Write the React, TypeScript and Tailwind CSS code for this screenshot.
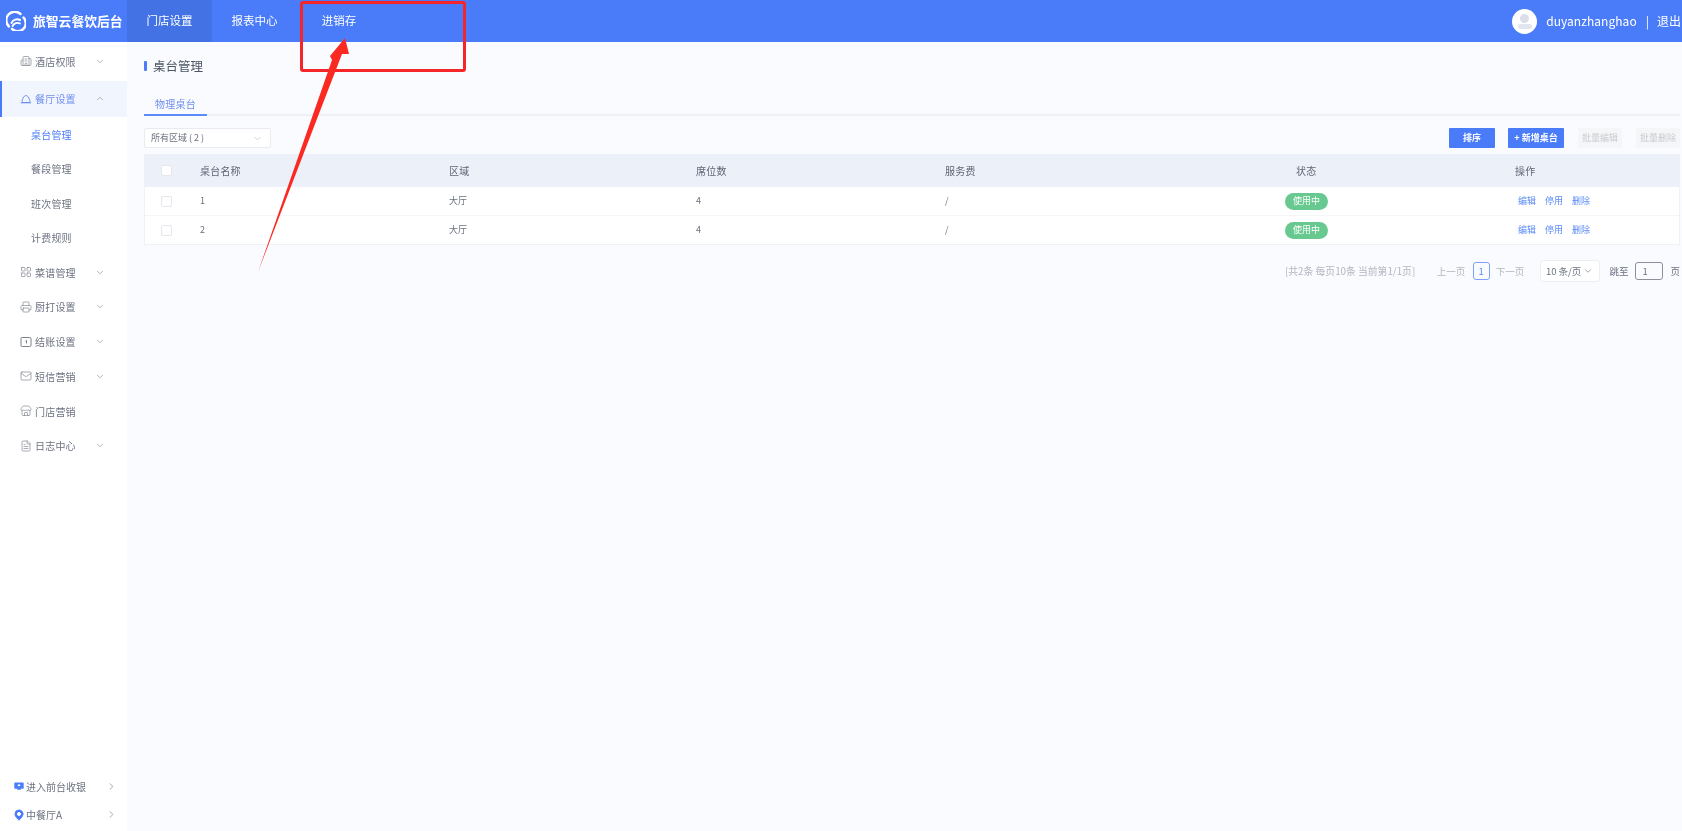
import { ChevronDown, ChevronRight, ChevronUp, Mail, MapPin, LayoutGrid, Printer, Store, FileText, Building2 } from "lucide-react";

const font = "font-['Noto_Sans_CJK_SC','Noto_Sans',sans-serif]";

const topNav = [
  { label: "门店设置", active: true, w: "w-[85px]" },
  { label: "报表中心", active: false, w: "w-[85px]" },
  { label: "进销存", active: false, w: "w-[84px]" },
];

function DomeIcon({ size = 12, className = "" }: { size?: number; className?: string }) {
  return (
    <svg width={size} height={size} viewBox="0 0 12 12" fill="none" stroke="currentColor" strokeWidth="1" className={className}>
      <path d="M2 9.500C1.800 7 3.800 2.500 6 2.500S10.200 7 10 9.500Z" strokeLinejoin="round" />
      <path d="M.8 9.800h10.400" />
    </svg>
  );
}

function CashIcon({ size = 12, className = "" }: { size?: number; className?: string }) {
  return (
    <svg width={size} height={size} viewBox="0 0 12 12" fill="none" stroke="currentColor" strokeWidth="1" className={className}>
      <rect x="1" y="1.500" width="10" height="9" rx="1.200" />
      <path d="M6.500 4.500v3M5.500 5l1-.6" />
    </svg>
  );
}

const menuAfter = [
  { label: "菜谱管理", icon: LayoutGrid, arrow: true },
  { label: "厨打设置", icon: Printer, arrow: true },
  { label: "结账设置", icon: CashIcon, arrow: true },
  { label: "短信营销", icon: Mail, arrow: true },
  { label: "门店营销", icon: Store, arrow: false },
  { label: "日志中心", icon: FileText, arrow: true },
];

const subMenu = [
  { label: "桌台管理", active: true },
  { label: "餐段管理", active: false },
  { label: "班次管理", active: false },
  { label: "计费规则", active: false },
];

const rows = [
  { id: 1, name: "1", h: "h-[29px] border-b border-[#f3f5f9]" },
  { id: 2, name: "2", h: "h-[28px]" },
];

function Logo() {
  return (
    <svg width="20" height="20" viewBox="0 0 20 20" fill="none" stroke="#fff" strokeLinecap="round" className="shrink-0">
      <path d="M14.500 3A8 8 0 0 0 3 15.500" strokeWidth="2.400" />
      <path d="M6 17.800A8 8 0 0 0 17.500 6.500" strokeWidth="2.400" />
      <path d="M5.500 12C7 8.500 11 7.500 14 9" strokeWidth="2" />
      <path d="M6.500 15C8 12 11.500 11 14 12.500" strokeWidth="1.800" />
    </svg>
  );
}

function MenuRow({ label, Icon, arrow }: { label: string; Icon: React.ComponentType<{ size?: number; strokeWidth?: number; className?: string }>; arrow: boolean }) {
  return (
    <div className="flex h-[34.750px] items-center pl-5 pr-[22px] text-[#6b7280]">
      <Icon size={12} strokeWidth={1.3} className="shrink-0 text-[#7b8089]" />
      <span className="ml-[3px] w-[55px] text-[10px] tracking-[0.2px]">{label}</span>
      {arrow && <ChevronDown size={11} strokeWidth={1.6} className="ml-[9px] text-[#8a8f98]" />}
    </div>
  );
}

function Checkbox() {
  return <div className="h-[11px] w-[11px] rounded-[2px] border border-[#e3e6ec] bg-white" />;
}

const cols = "grid-cols-[55px_249px_247px_249px_296px_241px_1fr]";

export default function App() {
  return (
    <div className={`relative flex h-[831px] w-[1682px] flex-col overflow-hidden bg-[#fafbff] blur-[0.4px] ${font}`}>
      {/* Top bar */}
      <header className="flex h-[42px] shrink-0 items-center bg-[#4a7cfa] text-white">
        <div className="flex w-[127px] items-center pl-[6px]">
          <Logo />
          <span className="ml-[7px] whitespace-nowrap text-[12.800px] font-bold">旅智云餐饮后台</span>
        </div>
        {topNav.map((item) => (
          <div
            key={item.label}
            className={`flex h-full items-center justify-center text-[11.500px] ${item.w} ${item.active ? "bg-[#4272e4]" : ""}`}
          >
            {item.label}
          </div>
        ))}
        <div className="ml-auto flex items-center">
          <div className="flex h-[25px] w-[25px] flex-col items-center justify-center rounded-full bg-white">
            <div className="h-[9px] w-[9px] rounded-full bg-[#d9deea]" />
            <div className="mt-[1px] h-[5px] w-[14px] rounded-full bg-[#e1e5ee]" />
          </div>
          <span className="ml-[9px] text-[12px] tracking-[0.05px]">duyanzhanghao</span>
          <span className="ml-[9px] text-[12px]">|</span>
          <span className="ml-[8px] w-[25px] whitespace-nowrap text-[12px]">退出</span>
        </div>
      </header>

      <div className="flex min-h-0 flex-1">
        {/* Sidebar */}
        <aside className="flex w-[127px] shrink-0 flex-col bg-white pt-[2px]">
          <MenuRow label="酒店权限" Icon={Building2} arrow />
          <div className="mt-[2px] flex h-[36px] items-center border-l-2 border-[#4a7cfa] bg-[#f1f5fe] pl-[18px] pr-[22px] text-[#6f8ff0]">
            <DomeIcon className="shrink-0" />
            <span className="ml-[3px] w-[55px] text-[10px] tracking-[0.2px]">餐厅设置</span>
            <ChevronUp size={11} strokeWidth={1.6} className="ml-[9px] text-[#8a8f98]" />
          </div>
          {subMenu.map((s) => (
            <div
              key={s.label}
              className={`flex h-[34.500px] items-center pl-[31px] text-[10px] tracking-[0.2px] ${s.active ? "text-[#4a7cfa]" : "text-[#6b7280]"}`}
            >
              {s.label}
            </div>
          ))}
          {menuAfter.map((m) => (
            <MenuRow key={m.label} label={m.label} Icon={m.icon} arrow={m.arrow} />
          ))}
          <div className="mt-auto pb-[2px]">
            <div className="flex h-[28px] items-center pl-[14px] text-[10px] text-[#6b7280]">
              <svg width="10" height="10" viewBox="0 0 10 10" className="shrink-0">
                <path d="M1 1.500h8a.7.7 0 0 1 .7.700v4.800a.7.7 0 0 1-.7.700H6.500l.6 1H2.900l.6-1H1a.7.7 0 0 1-.7-.700V2.200A.7.7 0 0 1 1 1.500Z" fill="#4a7cfa" />
                <rect x="3.800" y="3.500" width="2.400" height="1.600" fill="#fff" />
              </svg>
              <span className="ml-[2px] w-[80px]">进入前台收银</span>
              <ChevronRight size={11} strokeWidth={2} className="text-[#9aa0aa]" />
            </div>
            <div className="flex h-[29px] items-center pl-[13px] text-[10px] text-[#6b7280]">
              <MapPin size={12} fill="#4a7cfa" stroke="#4a7cfa" strokeWidth={2} className="shrink-0 [&>circle]:fill-white [&>circle]:stroke-white" />
              <span className="ml-px w-[80px]">中餐厅A</span>
              <ChevronRight size={11} strokeWidth={2} className="text-[#9aa0aa]" />
            </div>
          </div>
        </aside>

        {/* Main */}
        <main className="min-w-0 flex-1 pl-[17px] pr-[2px]">
          <div className="mt-[14px] flex h-[20px] items-center">
            <div className="h-[10px] w-[3px] rounded-[1px] bg-[#4a7cfa]" />
            <h1 className="ml-[6px] text-[12.500px] font-normal text-[#4b5563]">桌台管理</h1>
          </div>

          <div className="mt-[17px] flex h-[23px] border-b-2 border-[#edf0f5]">
            <div className="-mb-[2px] flex w-[63px] justify-center border-b-2 border-[#5b8bf8] pt-[4px] text-[10px] leading-[14px] tracking-[0.2px] text-[#6f8ff0]">
              物理桌台
            </div>
          </div>

          <div className="mt-[12px] flex h-[20px] items-center">
            <div className="flex h-[20px] w-[127px] items-center justify-between rounded-[2px] border border-[#e8ebf1] bg-white pl-[6px] pr-[7px] text-[9px] text-[#6b7280]">
              所有区域 ( 2 )
              <ChevronDown size={11} strokeWidth={1.4} className="text-[#b8bcc4]" />
            </div>
            <button className="ml-auto h-[20px] w-[46px] rounded-[1px] bg-[#4a7cfa] text-[9px] font-bold text-white">排序</button>
            <button className="ml-[13px] h-[20px] w-[56px] rounded-[1px] bg-[#4a7cfa] text-[9px] font-bold text-white">+ 新增桌台</button>
            <button className="ml-[14px] h-[20px] w-[44px] rounded-[1px] bg-[#f5f6f8] text-[9px] text-[#c9ccd2]">批量编辑</button>
            <button className="ml-[14px] h-[20px] w-[44px] rounded-[1px] bg-[#f5f6f8] text-[9px] text-[#c9ccd2]">批量删除</button>
          </div>

          {/* Table */}
          <div className="mt-[6px] border-x border-b border-[#eff1f6] bg-white">
            <div className={`grid h-[33px] items-center bg-[#ecf0f9] pb-[1px] text-[10px] tracking-[0.2px] text-[#5f6673] ${cols}`}>
              <div className="pl-[16px]"><Checkbox /></div>
              <div>桌台名称</div>
              <div>区域</div>
              <div>席位数</div>
              <div>服务费</div>
              <div className="pl-[55px]">状态</div>
              <div className="pl-[33px]">操作</div>
            </div>
            {rows.map((row) => (
              <div key={row.id} className={`grid items-center text-[9px] text-[#6b7280] ${cols} ${row.h}`}>
                <div className="pl-[16px]"><Checkbox /></div>
                <div>{row.name}</div>
                <div>大厅</div>
                <div>4</div>
                <div>/</div>
                <div className="pl-[44px]">
                  <span className="flex h-[17px] w-[43px] items-center justify-center rounded-full bg-[#67c98f] text-white">使用中</span>
                </div>
                <div className="flex gap-[9px] pl-[36px] text-[#5b8bf8]">
                  <span>编辑</span>
                  <span>停用</span>
                  <span>删除</span>
                </div>
              </div>
            ))}
          </div>

          {/* Pagination */}
          <div className="mt-[15px] flex h-[22px] items-center text-[9.500px] text-[#b3b7c0]">
            <span className="ml-[1141px] w-[152px] whitespace-nowrap text-[9.800px]">[共2条 每页10条 当前第1/1页]</span>
            <span className="w-[36px]">上一页</span>
            <span className="flex h-[18px] w-[17px] items-center justify-center rounded-[3px] border border-[#7ea3fa] text-[#5b8bf8]">1</span>
            <span className="ml-[6px] w-[44px]">下一页</span>
            <span className="flex h-[22px] w-[60px] items-center justify-center gap-[2px] rounded-[3px] border border-[#eceef3] bg-white text-[#6b7280]">
              10 条/页
              <ChevronDown size={10} strokeWidth={1.5} />
            </span>
            <span className="ml-[10px] w-[25px] text-[#6b7280]">跳至</span>
            <span className="flex h-[18px] w-[28px] items-center rounded-[3px] border border-[#8b909c] pl-[7px] text-[#6b7280]">1</span>
            <span className="ml-[8px] text-[#6b7280]">页</span>
          </div>
        </main>
      </div>

      {/* Annotation drawn over the screenshot */}
      <div className="absolute left-[300px] top-[1px] h-[71px] w-[166px] rounded-[3px] border-[3px] border-[#f4262a]" />
      <svg className="pointer-events-none absolute left-0 top-0" width="420" height="290" viewBox="0 0 420 290" fill="none">
        <path d="M258 272L332 60L330 56L345 38L349 54L342 54Z" fill="#fa2a22" />
      </svg>
    </div>
  );
}
